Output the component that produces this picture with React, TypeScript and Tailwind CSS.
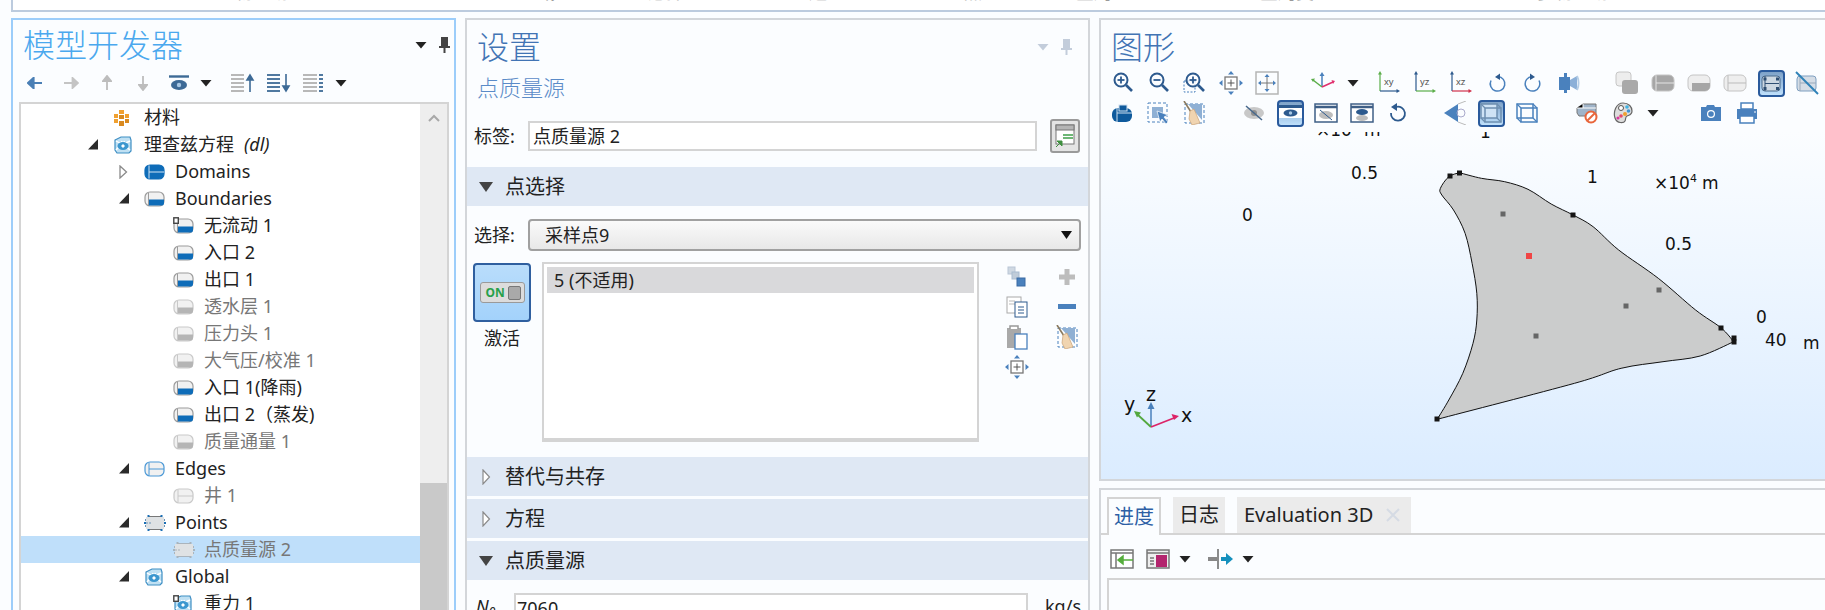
import React from "react";

const BLUE = "#4a81bd";
const NAVY = "#2d5a8e";

const Svg = ({ w = 24, h = 24, children }: { w?: number; h?: number; children: React.ReactNode }) => (
  <svg width={w} height={h} viewBox={`0 0 ${w} ${h}`} className="block shrink-0">
    {children}
  </svg>
);

const Cell = ({ children }: { children?: React.ReactNode }) => (
  <div className="flex h-[30px] w-9 shrink-0 items-center justify-center">{children}</div>
);

const Caret = ({ light = false }: { light?: boolean }) => (
  <Svg w={12} h={8}>
    <path d="M0.5 1h11L6 7.5z" fill={light ? "#c3cddb" : "#222"} />
  </Svg>
);

const CaretCell = ({ wide = false }: { wide?: boolean }) => (
  <div className={`flex h-[30px] shrink-0 items-center justify-center ${wide ? "w-6" : "w-[18px]"}`}>
    <Caret />
  </div>
);

// tree arrows
const ArrowOpen = () => (
  <Svg w={10} h={11}>
    <path d="M0 10.5h10V0z" fill="#2b2b2b" />
  </Svg>
);
const ArrowClosed = () => (
  <Svg w={9} h={14}>
    <path d="M1 1l6.5 6L1 13z" fill="#fff" stroke="#8a8a8a" strokeWidth="1.3" />
  </Svg>
);

type CylKind = "domain" | "boundary" | "boundaryOff" | "edge" | "edgeOff" | "point" | "pointOff";

const Cylinder = ({ kind, marker = false }: { kind: CylKind; marker?: boolean }) => {
  const stroke =
    kind === "domain" ? "#0e6cb8" : kind === "edge" ? "#4a98d6" : kind === "boundary" ? "#9c9c9c" : "#c9c9c9";
  const fill = kind === "domain" ? "#0e6cb8" : kind === "point" || kind === "pointOff" ? "#dfe2e4" : "#f1f1f1";
  const half = kind === "boundary" ? "#0e6cb8" : kind === "boundaryOff" ? "#b5b5b5" : null;
  const isPoint = kind === "point" || kind === "pointOff";
  const lineCol = kind === "domain" ? "#cfe4f5" : stroke;
  return (
    <Svg w={22} h={18}>
      {isPoint ? (
        <>
          <path d="M5 2.5h12M5 15.5h12" stroke={kind === "point" ? "#777" : "#aab4bc"} strokeWidth="1.2" />
          <rect x="2" y="3" width="18" height="12" fill={fill} />
          <path d="M2 9H8M1.500 5v8M20.500 5v8" stroke={kind === "point" ? "#6a93b5" : "#aab4bc"} strokeDasharray="2 1" fill="none" />
        </>
      ) : (
        <rect x="1" y="2" width="19" height="14" rx="5" fill={fill} stroke={stroke} strokeWidth="1.2" />
      )}
      {half && <path d="M4 9.5h16V13a2.6 2.6 0 0 1-2.6 2.6H4z" fill={half} />}
      {!half && !isPoint && <path d="M5 2.5v13M5 9h15" stroke={lineCol} strokeWidth="1" fill="none" />}
      {half && <path d="M4.5 2.5v13" stroke={stroke} strokeWidth="1" />}
      {isPoint && (
        <g fill={kind === "point" ? "#1b6fb5" : "#a8b4bd"}>
          <rect x="3.5" y="1" width="2" height="2" />
          <rect x="16.5" y="1" width="2" height="2" />
          <rect x="3.5" y="15" width="2" height="2" />
          <rect x="16.5" y="15" width="2" height="2" />
          <rect x="0" y="8" width="2" height="2" />
          <rect x="20" y="8" width="2" height="2" />
        </g>
      )}
      {marker && <rect x="0.8" y="0.8" width="4.5" height="5.5" fill="#fff" stroke="#444" strokeWidth="1.4" />}
    </Svg>
  );
};

const Materials = () => (
  <Svg w={18} h={18}>
    <g fill="#f0a030">
      <rect x="6" y="1" width="5" height="4" />
      <rect x="1" y="5" width="4" height="4" />
      <rect x="12" y="5" width="4" height="4" />
      <rect x="1" y="10" width="4" height="4" />
    </g>
    <g fill="#d98a20">
      <rect x="6" y="6" width="5" height="4" />
      <rect x="12" y="10" width="4" height="4" />
      <rect x="6" y="12" width="5" height="5" />
    </g>
  </Svg>
);

const Physics = ({ marker = false }: { marker?: boolean }) => (
  <Svg w={20} h={18}>
    <path d="M2 4l6-3h9l1 3v11l-2 2H4l-2-3z" fill="#bfe0f3" stroke="#3f8fc4" strokeWidth="1.2" />
    <path d="M3 5c4 3 9 3 14 0M3 14c3-3 5-5 6-9M17 14c-3-2-5-4-6-9" fill="none" stroke="#fff" strokeWidth="1.5" />
    <ellipse cx="10" cy="10" rx="5.5" ry="4" fill="#3c97cf" />
    <path d="M10 8l2 2-2 2-2-2z" fill="#fff" />
    {marker && <rect x="0.8" y="0.8" width="4.5" height="5.5" fill="#fff" stroke="#444" strokeWidth="1.4" />}
  </Svg>
);

type Row = {
  text: string;
  em?: string;
  level: 1 | 2 | 3;
  arrow?: "open" | "closed";
  icon: React.ReactNode;
  off?: boolean;
  selected?: boolean;
};

const rows: Row[] = [
  { text: "材料", level: 1, icon: <Materials /> },
  { text: "理查兹方程", em: "(dl)", level: 1, arrow: "open", icon: <Physics /> },
  { text: "Domains", level: 2, arrow: "closed", icon: <Cylinder kind="domain" /> },
  { text: "Boundaries", level: 2, arrow: "open", icon: <Cylinder kind="boundary" /> },
  { text: "无流动 1", level: 3, icon: <Cylinder kind="boundary" marker /> },
  { text: "入口 2", level: 3, icon: <Cylinder kind="boundary" /> },
  { text: "出口 1", level: 3, icon: <Cylinder kind="boundary" /> },
  { text: "透水层 1", level: 3, off: true, icon: <Cylinder kind="boundaryOff" /> },
  { text: "压力头 1", level: 3, off: true, icon: <Cylinder kind="boundaryOff" /> },
  { text: "大气压/校准 1", level: 3, off: true, icon: <Cylinder kind="boundaryOff" /> },
  { text: "入口 1(降雨)", level: 3, icon: <Cylinder kind="boundary" /> },
  { text: "出口 2（蒸发)", level: 3, icon: <Cylinder kind="boundary" /> },
  { text: "质量通量 1", level: 3, off: true, icon: <Cylinder kind="boundaryOff" /> },
  { text: "Edges", level: 2, arrow: "open", icon: <Cylinder kind="edge" /> },
  { text: "井 1", level: 3, off: true, icon: <Cylinder kind="edgeOff" /> },
  { text: "Points", level: 2, arrow: "open", icon: <Cylinder kind="point" /> },
  { text: "点质量源 2", level: 3, off: true, selected: true, icon: <Cylinder kind="pointOff" /> },
  { text: "Global", level: 2, arrow: "open", icon: <Physics /> },
  { text: "重力 1", level: 3, icon: <Physics marker /> },
];

const indent = { 1: "pl-[67px]", 2: "pl-[98px]", 3: "pl-[127px]" };

const TreeRow = ({ row }: { row: Row }) => (
  <div className={`flex h-[27px] items-center ${indent[row.level]} ${row.selected ? "bg-[#bfdffa]" : ""}`}>
    <div className="flex w-[25px] shrink-0 items-center">
      {row.arrow === "open" && <ArrowOpen />}
      {row.arrow === "closed" && <ArrowClosed />}
    </div>
    <div className="flex w-[31px] shrink-0 items-center">{row.icon}</div>
    <span className={`text-[18px] whitespace-nowrap ${row.off ? "text-[#777]" : "text-[#222]"}`}>{row.text}</span>
    {row.em && <span className="ml-[10px] text-[18px] text-[#222] italic">{row.em}</span>}
  </div>
);

// modeller toolbar
const HArrow = ({ dir, color }: { dir: "l" | "r"; color: string }) => (
  <Svg w={16} h={12}>
    {dir === "l" ? (
      <path d="M15 6H5M6.5 1L1 6l5.5 5z" stroke={color} strokeWidth="2.2" fill={color} />
    ) : (
      <path d="M1 6h10M9.5 1L15 6l-5.5 5z" stroke={color} strokeWidth="1.8" fill={color} />
    )}
  </Svg>
);
const VArrow = ({ dir }: { dir: "u" | "d" }) => (
  <Svg w={10} h={16}>
    {dir === "u" ? (
      <path d="M5 15V4M1 6l4-5 4 5z" stroke="#bdbdbd" strokeWidth="1.8" fill="#bdbdbd" />
    ) : (
      <path d="M5 1v11M1 10l4 5 4-5z" stroke="#bdbdbd" strokeWidth="1.8" fill="#bdbdbd" />
    )}
  </Svg>
);
const EyeBar = () => (
  <Svg w={22} h={16}>
    <path d="M1 1.5h20" stroke="#3d6a96" strokeWidth="2.4" />
    <ellipse cx="11" cy="10" rx="8" ry="5" fill="#3d6a96" />
    <circle cx="11" cy="10" r="2.2" fill="#a8c8e4" />
  </Svg>
);
const ListIcon = ({ arrow }: { arrow?: "u" | "d" }) => (
  <Svg w={26} h={20}>
    {[2, 6, 10, 14, 18].map((y) => (
      <path key={y} d={`M2 ${y}h${arrow ? 13 : 14}`} stroke={arrow === "d" ? "#3d6a96" : "#b0b0b0"} strokeWidth="1.8" />
    ))}
    {!arrow && [2, 6, 10, 14, 18].map((y) => <path key={y} d={`M18 ${y}h4`} stroke="#3d6a96" strokeWidth="1.8" />)}
    {arrow === "u" && <path d="M21 19V5M18 7l3-5 3 5z" stroke="#3d6a96" strokeWidth="1.6" fill="#3d6a96" />}
    {arrow === "d" && <path d="M21 1v14M18 13l3 5 3-5z" stroke="#3d6a96" strokeWidth="1.6" fill="#3d6a96" />}
  </Svg>
);

// graphics toolbar
const Zoom = ({ kind }: { kind: "in" | "out" | "box" }) => (
  <Svg w={24} h={24}>
    {kind === "box" && <rect x="1" y="10" width="11" height="11" fill="none" stroke={BLUE} strokeDasharray="2 1.5" />}
    <circle cx="10" cy="9" r="6.5" fill={kind === "box" ? "#ffffffaa" : "none"} stroke={NAVY} strokeWidth="2" />
    <path d="M15 14l6 6" stroke={NAVY} strokeWidth="2.6" />
    <path d="M6.5 9h7" stroke={NAVY} strokeWidth="1.8" />
    {kind !== "out" && <path d="M10 5.5v7" stroke={NAVY} strokeWidth="1.8" />}
  </Svg>
);
const Pan = () => (
  <Svg w={24} h={24}>
    <rect x="6" y="6" width="12" height="12" fill="#fff" stroke="#777" strokeWidth="1.3" />
    <path d="M12 8.5v7M8.5 12h7" stroke="#555" />
    <path d="M12 0l3 3.5H9zM12 24l3-3.5H9zM0 12l3.5-3v6zM24 12l-3.5-3v6z" fill={BLUE} />
  </Svg>
);
const Fit = () => (
  <Svg w={24} h={24}>
    <rect x="1" y="1" width="22" height="22" fill="none" stroke="#b5b5b5" strokeWidth="1.5" />
    <path d="M12 4v16M4 12h16" stroke="#777" />
    <path d="M12 3l2.5 3h-5zM12 21l2.5-3h-5zM3 12l3-2.5v5zM21 12l-3-2.5v5z" fill={BLUE} />
  </Svg>
);
const Axes = () => (
  <Svg w={26} h={22}>
    <path d="M12 15V2" stroke={BLUE} strokeWidth="1.5" />
    <path d="M12 0l2.5 4h-5z" fill={BLUE} />
    <path d="M12 15L3 8" stroke="#5aad48" strokeWidth="1.5" />
    <path d="M1 7l4-.5-2 3.5z" fill="#5aad48" />
    <path d="M12 15l11-5" stroke="#e0306e" strokeWidth="1.5" />
    <path d="M25 9l-3.5-1 1.5 4z" fill="#e0306e" />
  </Svg>
);
const Plane = ({ label, v, h }: { label: string; v: string; h: string }) => (
  <Svg w={24} h={24}>
    <path d="M3 3v17" stroke={v} strokeWidth="1.2" />
    <path d="M3 0l2 3.5H1z" fill={v} />
    <path d="M3 20h17" stroke={h} strokeWidth="1.2" />
    <path d="M23 20l-3.5 2v-4z" fill={h} />
    <text x="7" y="14" fontFamily="'Liberation Sans',sans-serif" fontSize="9.5" fill="#555">
      {label}
    </text>
  </Svg>
);
const Rotate = ({ flip = false }: { flip?: boolean }) => (
  <Svg w={20} h={20}>
    <g transform={flip ? "matrix(-1 0 0 1 20 0)" : undefined}>
      <path d="M11 3.5a7.3 7.3 0 1 1-7 4" fill="none" stroke={BLUE} strokeWidth="1.5" />
      <path d="M8 4l5-3.5V7z" fill={NAVY} />
    </g>
  </Svg>
);
const Light = () => (
  <Svg w={22} h={22}>
    <path d="M1 5h5V1h3v4h3v13H9v3H6v-3H1z" fill={BLUE} />
    <path d="M12 8l7-4v14l-7-4z" fill="#8cb0d8" />
    <path d="M19 4c2 4 2 10 0 14" fill="none" stroke="#b6cee6" strokeWidth="2" />
  </Svg>
);
const CubeStack = () => (
  <Svg w={24} h={24}>
    <rect x="1" y="1" width="15" height="14" rx="3" fill="#ededed" stroke="#c6c6c6" />
    <rect x="7" y="9" width="16" height="14" rx="3" fill="#a9a9a9" />
  </Svg>
);
const GrayCyl = ({ part }: { part: "all" | "bottom" | "none" }) => (
  <Svg w={24} h={18}>
    <rect x="1" y="1" width="22" height="16" rx="5" fill={part === "all" ? "#a6a6a6" : "#eeeeee"} stroke="#c4c4c4" />
    {part === "bottom" && <path d="M5 9h18v3a5 5 0 0 1-5 5H5z" fill="#a6a6a6" />}
    {part !== "bottom" && <path d="M5 1.5v15M5 9h18" stroke={part === "all" ? "#e4e4e4" : "#bbb"} fill="none" />}
  </Svg>
);
const Active = ({ children }: { children: React.ReactNode }) => (
  <div className="flex h-[27px] w-[27px] items-center justify-center rounded-[4px] border-2 border-[#2a5a9c] bg-gradient-to-b from-[#7ea2c8] to-[#bfe0fb]">
    {children}
  </div>
);
const WireCyl = () => (
  <Svg w={20} h={17}>
    <rect x="1" y="1" width="18" height="15" rx="3" fill="#cdd8e2" stroke="#49688a" />
    <path d="M4 8.5h14M4 1v15" stroke="#2f4f73" />
    <g fill="#2f4f73">
      <rect x="2.5" y="2.5" width="3" height="3" />
      <rect x="15" y="2.5" width="3" height="3" />
      <rect x="2.5" y="12" width="3" height="3" />
      <rect x="15" y="12" width="3" height="3" />
    </g>
  </Svg>
);
const NoCyl = () => (
  <Svg w={24} h={24}>
    <rect x="2" y="5" width="19" height="15" rx="3" fill="#d5dde6" stroke="#7f9fc0" />
    <path d="M5 12h16M5 5v15" stroke="#99a9ba" />
    <path d="M1 1l22 22" stroke="#2f82b8" strokeWidth="2" />
  </Svg>
);
const Film = () => (
  <Svg w={22} h={22}>
    <rect x="1" y="6" width="20" height="14" rx="6" fill="#0f5a9c" />
    <path d="M6 6v14M6 11h15" stroke="#cfe0ef" strokeWidth="1" />
    <rect x="8" y="3" width="8" height="6" fill="#0f5a9c" stroke="#cfe0ef" />
  </Svg>
);
const SelectBox = () => (
  <Svg w={22} h={22}>
    <rect x="1" y="1" width="19" height="19" fill="none" stroke={BLUE} strokeDasharray="3 2" />
    <rect x="5" y="5" width="11" height="11" fill="#8fb0d4" />
    <path d="M10 9l11 4-4 2 4 5-2 2-4-5-2 3z" fill={BLUE} stroke="#fff" strokeWidth=".7" />
  </Svg>
);
const Broom = () => (
  <Svg w={22} h={24}>
    <rect x="2" y="3" width="19" height="19" fill="none" stroke={BLUE} strokeDasharray="3 2" />
    <path d="M5 3h14v16z" fill="#8fb0d4" />
    <path d="M1 0l7 11" stroke="#8a7a5e" strokeWidth="1.6" />
    <path d="M7 10l4-2 6 14-8 2-3-6z" fill="#f0d4b0" stroke="#c9a176" strokeWidth=".7" />
  </Svg>
);
const EyeCross = () => (
  <Svg w={22} h={16}>
    <ellipse cx="11" cy="8" rx="10" ry="6" fill="#c8c8c8" />
    <circle cx="11" cy="8" r="3" fill="#8f8f8f" />
    <path d="M3 1l16 14" stroke="#47688c" strokeWidth="1.5" />
  </Svg>
);
const Window = ({ kind }: { kind: "off" | "both" }) => (
  <Svg w={24} h={20}>
    <rect x="1" y="1" width="22" height="18" fill="#fff" stroke="#3f5f86" strokeWidth="1.5" />
    <path d="M1 4h22" stroke="#3f5f86" strokeWidth="2.5" />
    {kind === "off" && (
      <>
        <ellipse cx="12" cy="12" rx="7" ry="4" fill="#bdbdbd" />
        <path d="M6 7l12 10" stroke={NAVY} />
      </>
    )}
    {kind === "both" && (
      <>
        <ellipse cx="12" cy="9" rx="6" ry="3" fill={NAVY} />
        <ellipse cx="12" cy="15" rx="6" ry="3" fill="#bdbdbd" />
      </>
    )}
  </Svg>
);
const EyeActive = () => (
  <Svg w={23} h={17}>
    <rect x="0" y="0" width="23" height="13" fill="#fff" />
    <path d="M0 1.5h23" stroke={NAVY} strokeWidth="3" />
    <ellipse cx="11.5" cy="8" rx="7" ry="3.5" fill={NAVY} />
    <circle cx="11.5" cy="8" r="1.7" fill="#a8c8e4" />
  </Svg>
);
const Undo = () => (
  <Svg w={20} h={20}>
    <path d="M8 4a7 7 0 1 1-5 6" fill="none" stroke={NAVY} strokeWidth="1.8" />
    <path d="M9 0v8L3 4z" fill={NAVY} />
  </Svg>
);
const Cone = () => (
  <Svg w={24} h={24}>
    <path d="M1 12l14-9v18z" fill={BLUE} />
    <path d="M15 3l8-3M15 21l8 3" stroke="#bbb" />
    <circle cx="18" cy="12" r="4" fill="none" stroke="#aac" />
  </Svg>
);
const Wire = ({ active = false }: { active?: boolean }) => (
  <Svg w={22} h={20}>
    <rect x="1" y="1" width="16" height="14" fill={active ? "#cfe3f5" : "none"} stroke={active ? "#6d8fb0" : BLUE} strokeWidth="1.5" />
    <rect x="5" y="5" width="16" height="14" fill="none" stroke={active ? "#6d8fb0" : BLUE} strokeWidth="1.5" />
    <path d="M1 1l4 4M17 1l4 4M1 15l4 4M17 15l4 4" stroke={active ? "#6d8fb0" : BLUE} strokeWidth="1.2" />
  </Svg>
);
const NoBox = () => (
  <Svg w={22} h={22}>
    <path d="M1 6l6-4h13v12H3L1 11z" fill="#9fb4c9" stroke="#777" />
    <path d="M7 2v4H1M7 6h13" stroke="#fff" />
    <circle cx="15" cy="15" r="5.5" fill="#fff" stroke="#e8663c" strokeWidth="2" />
    <path d="M11.5 18.5l7-7" stroke="#e8663c" strokeWidth="2" />
  </Svg>
);
const Palette = () => (
  <Svg w={20} h={22}>
    <path d="M10 1c6 0 9 4 9 8s-3 4-5 5-1 3-2 5-8 3-10-3C0 10 3 1 10 1z" fill="#ddd" stroke="#666" strokeWidth="1.2" />
    <circle cx="8" cy="6" r="2.5" fill="#fff" stroke="#555" />
    <circle cx="14" cy="5" r="1.8" fill="#3fb3e4" />
    <circle cx="15.5" cy="9" r="1.8" fill="#3f95d4" />
    <circle cx="12" cy="12" r="2" fill="#f0a030" />
    <circle cx="8" cy="14" r="1.8" fill="#e64a6a" />
    <circle cx="5" cy="16" r="1.6" fill="#d838a0" />
  </Svg>
);
const Camera = () => (
  <Svg w={20} h={16}>
    <path d="M0 2h5l1-2h7l1 2h6v14H0z" fill={BLUE} />
    <circle cx="10" cy="9" r="4" fill="#fff" />
    <circle cx="10" cy="9" r="2.8" fill={BLUE} />
  </Svg>
);
const Printer = () => (
  <Svg w={22} h={22}>
    <path d="M5 1h12v6H5z" fill="#fff" stroke={BLUE} strokeWidth="1.5" />
    <path d="M1 7h20v10H1z" fill={BLUE} />
    <path d="M4 14h14v7H4z" fill="#fff" stroke={BLUE} strokeWidth="1.5" />
    <path d="M18 10h2" stroke="#fff" />
  </Svg>
);

// selection list side tools
const Cubes = () => (
  <Svg w={20} h={22}>
    <rect x="1" y="1" width="7" height="7" fill="#cfd8e2" stroke="#b9c6d6" />
    <rect x="5" y="6" width="7" height="7" fill="#c0ccd9" stroke="#a8bbd0" />
    <rect x="10" y="12" width="8" height="8" fill={BLUE} stroke="#3a6ba3" />
  </Svg>
);
const Copy = () => (
  <Svg w={22} h={22}>
    <rect x="1" y="1" width="14" height="16" fill="#fff" stroke="#aaa" />
    <path d="M3 5h6M3 8h6" stroke="#bbb" />
    <rect x="9" y="6" width="12" height="15" fill="#fff" stroke={NAVY} />
    <path d="M12 11h6M12 14h6M12 17h6" stroke={NAVY} />
  </Svg>
);
const Paste = () => (
  <Svg w={22} h={26}>
    <rect x="1" y="4" width="14" height="20" fill="#a9a9a9" />
    <path d="M4 5V2h8v3" fill="#fff" stroke="#999" strokeWidth="1.5" />
    <rect x="9" y="10" width="12" height="15" fill="#fff" stroke={BLUE} strokeWidth="1.3" />
  </Svg>
);
const Plus = () => (
  <Svg w={18} h={18}>
    <path d="M9 1v16M1 9h16" stroke="#bdbdbd" strokeWidth="5" />
  </Svg>
);
const Minus = () => (
  <Svg w={18} h={6}>
    <rect width="18" height="5" fill={BLUE} />
  </Svg>
);
const OnSwitch = () => (
  <div className="flex h-[21px] w-[45px] items-center rounded-[3px] border border-[#9a9a9a] bg-[#dcdcdc] pl-[5px]">
    <span className="w-[24px] text-[12px] leading-none font-bold text-[#27a04a]">ON</span>
    <div className="mr-[3px] ml-auto h-[14px] w-[13px] rounded-[2px] border border-[#777] bg-[#a9a9a9]" />
  </div>
);
const FormIcon = () => (
  <Svg w={20} h={24}>
    <rect x="1" y="1" width="18" height="19" fill="#fff" stroke="#777" />
    <rect x="1" y="1" width="18" height="5" fill="#b5b5b5" stroke="#777" />
    <path d="M8 11h10M8 14h10" stroke="#3fa04a" strokeWidth="1.3" />
    <path d="M1 23l5-5M2 17h5v5z" stroke="#3f8f3f" fill="#3f8f3f" />
  </Svg>
);

const Section = ({ open = false, title }: { open?: boolean; title: string }) => (
  <div className="flex h-[39px] items-center bg-[#dfe8f4] text-[20px] text-[#222]">
    <div className="flex w-[38px] shrink-0 justify-center">
      {open ? (
        <Svg w={14} h={10}>
          <path d="M0 0h14L7 10z" fill="#444" />
        </Svg>
      ) : (
        <Svg w={9} h={16}>
          <path d="M1 1l6.5 7L1 15z" fill="#fff" stroke="#8a8a8a" strokeWidth="1.2" />
        </Svg>
      )}
    </div>
    {title}
  </div>
);

const PanelPin = ({ light = false }: { light?: boolean }) => (
  <div className="flex items-center gap-[12px]">
    <Caret light={light} />
    <Svg w={11} h={16}>
      <path d="M2 0h7v9h2v2H6.5v5h-2v-5H0V9h2z" fill={light ? "#c3cddb" : "#444"} />
    </Svg>
  </div>
);

// model outline, in page coordinates
type P = [number, number];
const left: P[] = [
  [1437.2, 419.3],
  [1448.8, 400],
  [1462.8, 373.3],
  [1473, 343.3],
  [1476.8, 320],
  [1476.8, 293.3],
  [1472.1, 263.3],
  [1465.1, 233.3],
  [1453.5, 210],
  [1441.8, 195],
  [1440.4, 188.3],
  [1448.8, 176.7],
  [1459.5, 172.7],
];
const top: P[] = [
  [1459.5, 172.7],
  [1481.4, 178.3],
  [1504.7, 181.7],
  [1528, 189.3],
  [1551.2, 204],
  [1573.1, 215],
  [1593.1, 226.7],
  [1618.7, 250],
  [1658.3, 278.3],
  [1695.6, 310],
  [1721.2, 328],
  [1733.7, 341.7],
];
const bottom: P[] = [
  [1733.7, 341.7],
  [1700.2, 356],
  [1663, 361.7],
  [1621.1, 368.3],
  [1574.5, 383.3],
  [1437.2, 419.3],
];

const smooth = (pts: P[]) => {
  let d = "";
  for (let i = 0; i < pts.length - 1; i++) {
    const a = pts[Math.max(i - 1, 0)];
    const b = pts[i];
    const c = pts[i + 1];
    const e = pts[Math.min(i + 2, pts.length - 1)];
    d += `C${b[0] + (c[0] - a[0]) / 6} ${b[1] + (c[1] - a[1]) / 6} ${c[0] - (e[0] - b[0]) / 6} ${c[1] - (e[1] - b[1]) / 6} ${c[0]} ${c[1]}`;
  }
  return d;
};
const outline = `M1437.2 419.3${smooth(left)}${smooth(top)}${smooth(bottom)}Z`;

const blackPts: P[] = [
  [1437, 419],
  [1450, 176],
  [1459.5, 173],
  [1573, 215],
  [1721, 328],
  [1734, 338],
  [1734, 342],
];
const greyPts: P[] = [
  [1503, 214],
  [1536, 336],
  [1626, 306],
  [1659, 290],
];

const labels: { x: number; y: number; t: string }[] = [
  { x: 1480, y: 138, t: "1" },
  { x: 1351, y: 179, t: "0.5" },
  { x: 1242, y: 221, t: "0" },
  { x: 1587, y: 183, t: "1" },
  { x: 1665, y: 250, t: "0.5" },
  { x: 1756, y: 323, t: "0" },
  { x: 1765, y: 346, t: "40" },
  { x: 1803, y: 349, t: "m" },
];

const Exponent = ({ x, y }: { x: number; y: number }) => (
  <text x={x} y={y}>
    ×10
    <tspan fontSize="11" dy="-7">4</tspan>
    <tspan dy="7" dx="5">m</tspan>
  </text>
);

const Plot = () => (
  <svg width="724" height="347" viewBox="1101 132 724 347" className="block">
    <path d={outline} fill="#cbcccc" stroke="#111" strokeWidth="1" />
    {blackPts.map(([x, y]) => (
      <rect key={`${x}-${y}`} x={x - 2.5} y={y - 2.5} width="5" height="5" fill="#151515" />
    ))}
    {greyPts.map(([x, y]) => (
      <rect key={`${x}-${y}`} x={x - 2.5} y={y - 2.5} width="5" height="5" fill="#666" />
    ))}
    <rect x="1526" y="253" width="6" height="6" fill="#f04545" />
    <g fontFamily="'DejaVu Sans',sans-serif" fontSize="17" fill="#111">
      {labels.map((l) => (
        <text key={`${l.x}-${l.y}`} x={l.x} y={l.y}>
          {l.t}
        </text>
      ))}
      <Exponent x={1316} y={136} />
      <Exponent x={1654} y={189} />
      <g fontSize="19">
        <text x="1146" y="401">z</text>
        <text x="1124" y="411">y</text>
        <text x="1181" y="422">x</text>
      </g>
    </g>
    <path d="M1151 427v-20" stroke={BLUE} strokeWidth="1.5" />
    <path d="M1151 402l3.5 7h-7z" fill={BLUE} />
    <path d="M1151 427l-13-12" stroke="#53a83e" strokeWidth="1.8" />
    <path d="M1134 411l7 1.5-4 5z" fill="#53a83e" />
    <path d="M1151 427l23-9" stroke="#dc2468" strokeWidth="1.8" />
    <path d="M1179 416l-7.5-2 2.5 6z" fill="#dc2468" />
  </svg>
);

const App = () => {
  return (
    <div className="flex h-[610px] w-[1825px] flex-col overflow-hidden bg-[#fbfdff] font-['Noto_Sans','Noto_Sans_CJK_SC',sans-serif] text-[18px] text-[#222]">
      {/* ribbon, only its last pixels are in the frame */}
      <div className="ml-[11px] h-[12px] shrink-0 overflow-hidden border-b-2 border-l-2 border-[#bccbde] bg-white">
        <div className="-mt-[21px] flex whitespace-nowrap text-[#999]">
          <span className="ml-[222px] w-[302px]">物理场</span>
          <span className="w-[111px]">域</span>
          <span className="w-[161px]">选择</span>
          <span className="w-[155px]">边</span>
          <span className="w-[112px]">点</span>
          <span className="w-[184px]">全局</span>
          <span className="w-[277px]">全局类</span>
          <span>多物理场</span>
        </div>
      </div>

      <div className="flex min-h-0 flex-1 gap-[9px] pt-[6px] pl-[11px]">
        {/* model builder */}
        <div className="flex w-[445px] shrink-0 flex-col border-x-2 border-t-2 border-[#9ccdfa]">
          <div className="flex h-[48px] shrink-0 items-center justify-between pt-[2px] pr-[4px] pl-[10px]">
            <span className="text-[32px] leading-none font-light text-[#4aa8ee]">模型开发器</span>
            <PanelPin />
          </div>
          <div className="flex h-[30px] shrink-0 items-center pl-[4px]">
            <Cell><HArrow dir="l" color="#4a7fb5" /></Cell>
            <Cell><HArrow dir="r" color="#c4c4c4" /></Cell>
            <Cell><VArrow dir="u" /></Cell>
            <Cell><VArrow dir="d" /></Cell>
            <Cell><EyeBar /></Cell>
            <CaretCell />
            <div className="w-[9px]" />
            <Cell><ListIcon arrow="u" /></Cell>
            <Cell><ListIcon arrow="d" /></Cell>
            <Cell><ListIcon /></Cell>
            <CaretCell />
          </div>
          <div className="mt-[4px] mr-[5px] ml-[6px] flex min-h-0 flex-1 border-x-2 border-t-2 border-[#d4d4d4] bg-white">
            <div className="min-w-0 flex-1 overflow-hidden">
              {rows.map((r) => (
                <TreeRow key={r.text} row={r} />
              ))}
            </div>
            <div className="flex w-[27px] shrink-0 flex-col bg-[#eeeeee]">
              <div className="flex h-[379px] justify-center pt-[10px]">
                <Svg w={12} h={8}>
                  <path d="M1 7l5-5 5 5" fill="none" stroke="#a8a8a8" strokeWidth="2" />
                </Svg>
              </div>
              <div className="flex-1 bg-[#c9c9c9]" />
            </div>
          </div>
        </div>

        {/* settings */}
        <div className="flex w-[625px] shrink-0 flex-col border-x-2 border-t-2 border-[#d3d6da]">
          <div className="flex h-[54px] shrink-0 items-center justify-between pr-[16px] pl-[10px]">
            <span className="text-[32px] leading-none font-light text-[#4274b4]">设置</span>
            <PanelPin light />
          </div>
          <div className="flex h-[26px] shrink-0 items-center pl-[10px] text-[22px] font-light text-[#5a8bc8]">点质量源</div>
          <div className="mt-[19px] flex h-[34px] shrink-0 items-center">
            <span className="w-[61px] pl-[7px]">标签:</span>
            <div className="flex h-[30px] w-[509px] items-center border-2 border-[#d4d4d4] bg-white pl-[3px]">点质量源 2</div>
            <div className="ml-[13px] flex h-[34px] w-[30px] items-center justify-center rounded-[3px] border-2 border-[#9a9a9a] bg-[#e4e4e4]">
              <FormIcon />
            </div>
          </div>
          <div className="mt-[14px]">
            <Section open title="点选择" />
          </div>
          <div className="mt-[13px] flex h-[32px] shrink-0 items-center">
            <span className="w-[61px] pl-[7px]">选择:</span>
            <div className="flex h-[32px] w-[553px] items-center justify-between rounded-[4px] border-2 border-[#a0a0a0] bg-gradient-to-b from-[#fafafa] to-[#e8e8e8] pr-[7px] pl-[15px]">
              采样点9
              <Svg w={11} h={8}>
                <path d="M0 0h11L5.5 8z" fill="#111" />
              </Svg>
            </div>
          </div>
          <div className="mt-[11px] flex h-[180px] shrink-0">
            <div className="ml-[6px] flex w-[58px] shrink-0 flex-col items-center pt-[1px]">
              <div className="flex h-[59px] w-[58px] items-center justify-center rounded-[4px] border-2 border-[#2f5f9f] bg-gradient-to-b from-[#b9ddfb] to-[#a3d2fb]">
                <OnSwitch />
              </div>
              <span className="mt-[3px]">激活</span>
            </div>
            <div className="ml-[11px] flex w-[437px] shrink-0 flex-col border-x-2 border-t-2 border-b-4 border-[#d4d4d4] bg-white px-[3px] pt-[3px]">
              <div className="flex h-[26px] items-center bg-[#d9d9db] pl-[7px]">5 (不适用)</div>
            </div>
            <div className="ml-[13px] grid h-[120px] grid-cols-[50px_50px] grid-rows-[30px_30px_30px_30px] place-items-center">
              <Cubes />
              <Plus />
              <Copy />
              <Minus />
              <Paste />
              <Broom />
              <Pan />
            </div>
          </div>
          <div className="mt-[15px]">
            <Section title="替代与共存" />
          </div>
          <div className="mt-[3px]">
            <Section title="方程" />
          </div>
          <div className="mt-[3px]">
            <Section open title="点质量源" />
          </div>
          <div className="mt-[13px] flex h-[30px] shrink-0 items-start">
            <span className="w-[47px] pl-[9px] italic">
              N<sub className="text-[12px]">0</sub>
            </span>
            <div className="flex h-[30px] w-[514px] items-center border-2 border-[#d4d4d4] bg-white pl-[1px]">7060</div>
            <span className="ml-[17px]">kg/s</span>
          </div>
        </div>

        {/* graphics + messages */}
        <div className="flex min-w-0 flex-1 flex-col gap-[7px]">
          <div className="flex h-[463px] shrink-0 flex-col border-t-2 border-b-2 border-l-2 border-[#d3d6da]">
            <div className="flex h-[48px] shrink-0 items-center pt-[6px] pl-[10px] text-[32px] leading-none font-light text-[#4274b4]">图形</div>
            <div className="flex h-[30px] shrink-0 items-center pl-[4px]">
              <Cell><Zoom kind="in" /></Cell>
              <Cell><Zoom kind="out" /></Cell>
              <Cell><Zoom kind="box" /></Cell>
              <Cell><Pan /></Cell>
              <Cell><Fit /></Cell>
              <div className="w-[22px]" />
              <Cell><Axes /></Cell>
              <CaretCell wide />
              <div className="w-[6px]" />
              <Cell><Plane label="xy" v="#5aad48" h={NAVY} /></Cell>
              <Cell><Plane label="yz" v={NAVY} h="#5aad48" /></Cell>
              <Cell><Plane label="xz" v={NAVY} h="#d0304a" /></Cell>
              <Cell><Rotate /></Cell>
              <Cell><Rotate flip /></Cell>
              <Cell><Light /></Cell>
              <div className="w-[24px]" />
              <Cell><CubeStack /></Cell>
              <Cell><GrayCyl part="all" /></Cell>
              <Cell><GrayCyl part="bottom" /></Cell>
              <Cell><GrayCyl part="none" /></Cell>
              <Cell><Active><WireCyl /></Active></Cell>
              <Cell><NoCyl /></Cell>
            </div>
            <div className="flex h-[30px] shrink-0 items-center pl-[3px]">
              <Cell><Film /></Cell>
              <Cell><SelectBox /></Cell>
              <Cell><Broom /></Cell>
              <div className="w-[24px]" />
              <Cell><EyeCross /></Cell>
              <Cell><Active><EyeActive /></Active></Cell>
              <Cell><Window kind="off" /></Cell>
              <Cell><Window kind="both" /></Cell>
              <Cell><Undo /></Cell>
              <div className="w-[21px]" />
              <Cell><Cone /></Cell>
              <Cell><Active><Wire active /></Active></Cell>
              <Cell><Wire /></Cell>
              <div className="w-[24px]" />
              <Cell><NoBox /></Cell>
              <Cell><Palette /></Cell>
              <CaretCell wide />
              <div className="w-[28px]" />
              <Cell><Camera /></Cell>
              <Cell><Printer /></Cell>
            </div>
            <div className="mt-[4px] min-h-0 flex-1 overflow-hidden bg-gradient-to-b from-[#fbfdff] to-[#dbecff]">
              <Plot />
            </div>
          </div>

          <div className="flex min-h-0 flex-1 flex-col border-t-2 border-l-2 border-[#d3d6da]">
            <div className="flex h-[45px] shrink-0 items-end gap-[12px] border-b-2 border-[#d4d4d4] pl-[6px] text-[20px]">
              <div className="-mb-[2px] flex h-[38px] w-[54px] items-center justify-center border-x-2 border-t-2 border-[#d4d4d4] bg-[#fbfdff] text-[#2d5fa5]">进度</div>
              <div className="flex h-[36px] w-[52px] items-center justify-center bg-[#ebebeb]">日志</div>
              <div className="flex h-[36px] w-[174px] items-center justify-between bg-[#ebebeb] pr-[11px] pl-[7px]">
                Evaluation 3D
                <Svg w={14} h={14}>
                  <path d="M1 1l12 12M13 1L1 13" stroke="#d5dbe4" strokeWidth="2" />
                </Svg>
              </div>
            </div>
            <div className="flex h-[43px] shrink-0 items-center pt-[5px] pl-[3px]">
              <Cell>
                <Svg w={24} h={20}>
                  <rect x="1" y="1" width="22" height="18" fill="#fff" stroke="#777" strokeWidth="1.5" />
                  <path d="M1 4h22M6 4v15" stroke="#777" strokeWidth="1.5" />
                  <path d="M9 11h14M13 7l-5 4 5 4z" stroke="#55ad3c" strokeWidth="1.5" fill="#55ad3c" />
                </Svg>
              </Cell>
              <Cell>
                <Svg w={24} h={20}>
                  <rect x="1" y="1" width="22" height="18" fill="#eee" stroke="#777" strokeWidth="1.5" />
                  <path d="M1 4h22M4 9h4M4 12h4M4 15h4" stroke="#777" strokeWidth="1.3" />
                  <rect x="10" y="6" width="11" height="12" fill="#b3256e" />
                </Svg>
              </Cell>
              <CaretCell />
              <div className="w-[9px]" />
              <Cell>
                <Svg w={26} h={20}>
                  <path d="M0 10h9" stroke="#888" strokeWidth="4" />
                  <path d="M10 0v20" stroke="#666" strokeWidth="1.5" />
                  <path d="M13 10h6" stroke="#1590bd" strokeWidth="4" />
                  <path d="M18 4l7 6-7 6z" fill="#1590bd" />
                </Svg>
              </Cell>
              <CaretCell />
            </div>
            <div className="ml-[6px] min-h-0 flex-1 border-t-2 border-l-2 border-[#d4d4d4]" />
          </div>
        </div>
      </div>
    </div>
  );
};

export default App;
